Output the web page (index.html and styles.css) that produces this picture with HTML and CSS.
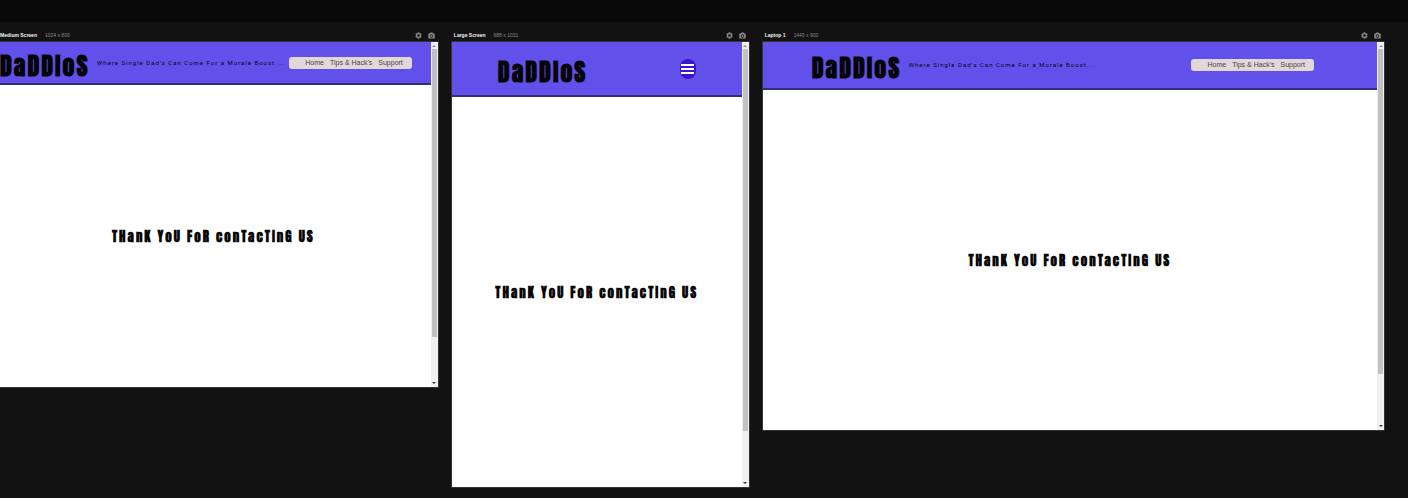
FILE: index.html
```html
<!DOCTYPE html>
<html lang="en">
<head>
<meta charset="utf-8">
<title>Daddios – responsive preview</title>
<link rel="stylesheet" href="styles.css">
</head>
<body>
<svg class="sprite" aria-hidden="true">
  <symbol id="gear" viewBox="0 0 24 24"><path fill-rule="evenodd" d="M9.500 1h5l.6 3.200 2 1.200 3.100-1.100 2.500 4.300-2.500 2.200v2.400l2.500 2.200-2.500 4.300-3.100-1.100-2 1.200-.6 3.200h-5l-.6-3.200-2-1.200-3.100 1.100-2.500-4.300 2.500-2.200v-2.400L1.300 8.600l2.500-4.300 3.100 1.100 2-1.200zM12 7.500a4.500 4.500 0 1 0 0 9 4.500 4.500 0 0 0 0-9z"/></symbol>
  <symbol id="camera" viewBox="0 0 24 24"><path fill-rule="evenodd" d="M8.500 2h7l2 3H21a2 2 0 0 1 2 2v13a2 2 0 0 1-2 2H3a2 2 0 0 1-2-2V7a2 2 0 0 1 2-2h3.500zM12 7.500a6 6 0 1 0 0 12 6 6 0 0 0 0-12z"/><circle cx="12" cy="13.500" r="3.500"/></symbol>
</svg>
<div class="toolbar"></div>
<main class="screens">
  <section class="screen medium">
    <div class="caption">
      <strong>Medium Screen</strong><span class="size">1024 x 800</span>
      <button class="tool" aria-label="Settings"><svg><use href="#gear"/></svg></button>
      <button class="tool" aria-label="Screenshot"><svg><use href="#camera"/></svg></button>
    </div>
    <div class="device">
      <div class="page">
        <header class="site-header">
          <a class="logo" href="#">DaDDIoS</a>
          <p class="tagline">Where Single Dad's Can Come For a Morale Boost....</p>
          <nav class="menu"><a href="#">Home</a><a href="#">Tips &amp; Hack's</a><a href="#">Support</a></nav>
        </header>
        <div class="message"><h1>THanK YoU FoR conTacTInG US</h1></div>
      </div>
      <div class="scrollbar"><i class="up"></i><i class="thumb"></i><i class="down"></i></div>
    </div>
  </section>
  <section class="screen large">
    <div class="caption">
      <strong>Large Screen</strong><span class="size">688 x 1031</span>
      <button class="tool" aria-label="Settings"><svg><use href="#gear"/></svg></button>
      <button class="tool" aria-label="Screenshot"><svg><use href="#camera"/></svg></button>
    </div>
    <div class="device">
      <div class="page">
        <header class="site-header">
          <a class="logo" href="#">DaDDIoS</a>
          <button class="burger" aria-label="Menu"><i></i><i></i><i></i></button>
        </header>
        <div class="message"><h1>THanK YoU FoR conTacTInG US</h1></div>
      </div>
      <div class="scrollbar"><i class="up"></i><i class="thumb"></i><i class="down"></i></div>
    </div>
  </section>
  <section class="screen laptop">
    <div class="caption">
      <strong>Laptop 1</strong><span class="size">1440 x 900</span>
      <button class="tool" aria-label="Settings"><svg><use href="#gear"/></svg></button>
      <button class="tool" aria-label="Screenshot"><svg><use href="#camera"/></svg></button>
    </div>
    <div class="device">
      <div class="page">
        <header class="site-header">
          <a class="logo" href="#">DaDDIoS</a>
          <p class="tagline">Where Single Dad's Can Come For a Morale Boost....</p>
          <nav class="menu"><a href="#">Home</a><a href="#">Tips &amp; Hack's</a><a href="#">Support</a></nav>
        </header>
        <div class="message"><h1>THanK YoU FoR conTacTInG US</h1></div>
      </div>
      <div class="scrollbar"><i class="up"></i><i class="thumb"></i><i class="down"></i></div>
    </div>
  </section>
</main>
</body>
</html>
```
FILE: styles.css
```css
* { box-sizing: border-box; }
body {
  margin: 0;
  min-height: 100vh;
  overflow: hidden;
  background: #121212;
  font-family: "Liberation Sans", Arial, sans-serif;
}
a { color: inherit; text-decoration: none; }
button { border: 0; padding: 0; background: none; }
.sprite { display: none; }
.toolbar { height: 22px; background: #090909; }

.screens {
  display: flex;
  align-items: flex-start;
  gap: 14px;
  margin-left: -4px;
  padding: 8px 24px 0 0;
}
.screen { min-width: 0; }
.medium { flex: 1024 1 0; }
.large { flex: 688 1 0; }
.laptop { flex: 1440 1 0; }

.caption {
  display: flex;
  align-items: center;
  gap: 6px;
  height: 12px;
  padding: 0 3px 1px 2px;
  font-size: 5px;
  line-height: 11px;
  color: #f4f4f4;
}
.medium .caption { padding-left: 4px; }
.size { margin: 0 auto 0 2px; color: #8c8c8c; }
.tool { width: 7px; height: 7px; display: flex; }
.tool svg { width: 100%; height: 100%; fill: #8c8c8c; }

.device { display: flex; background: #fff; outline: 1px solid #333; }
.medium .device { aspect-ratio: 1024 / 800; }
.large .device { aspect-ratio: 688 / 1031; }
.laptop .device { aspect-ratio: 1440 / 900; }
.page { flex: 1; min-width: 0; display: flex; flex-direction: column; }

.site-header {
  display: flex;
  align-items: center;
  height: 43px;
  background: #6151ea;
  border-bottom: 2px solid #352c80;
  color: #050508;
}
.large .site-header { height: 55px; justify-content: space-between; padding: 0 46px; }
.laptop .site-header { height: 48px; padding: 0 63px 0 49px; }
.medium .site-header { padding: 0 19px 0 4px; }

.logo {
  flex: none;
  width: 88px;
  padding-top: 6px;
  font: 700 24px/30px Anton, Impact, "Liberation Sans Narrow", sans-serif;
  letter-spacing: 2px;
  white-space: nowrap;
}
.tagline {
  margin: 0 auto 0 9px;
  font: 400 6px/8px Roboto, "Liberation Sans", sans-serif;
  letter-spacing: 1px;
  white-space: nowrap;
}
.menu {
  flex: none;
  display: flex;
  gap: 6px;
  padding: 0 9px 0 16px;
  border-radius: 3px;
  background: #e2d8da;
  color: #444;
  font-size: 7px;
  line-height: 12px;
}
.burger {
  display: flex;
  flex-direction: column;
  align-items: center;
  justify-content: center;
  gap: 2px;
  width: 16px;
  height: 20px;
  border-radius: 8px;
  background: #3d12cf;
}
.burger i { width: 13px; height: 2px; background: #fff; }

.message { flex: 1; display: grid; place-items: center; padding-top: 2px; }
.message h1 {
  margin: 0;
  color: #080808;
  font: 700 13px/18px Anton, Impact, "Liberation Sans Narrow", sans-serif;
  letter-spacing: 2px;
  white-space: nowrap;
}

.scrollbar {
  display: flex;
  flex-direction: column;
  align-items: center;
  width: 7px;
  padding: 3px 0;
  background: #f0f0f0;
}
.up { border: 2px solid transparent; border-top: 0; border-bottom-color: #888; }
.down { margin-top: auto; border: 2px solid transparent; border-bottom: 0; border-top-color: #333; }
.thumb { width: 5px; height: 85%; margin-top: 2px; background: #c1c1c1; }
.large .thumb { height: 87%; }
```
